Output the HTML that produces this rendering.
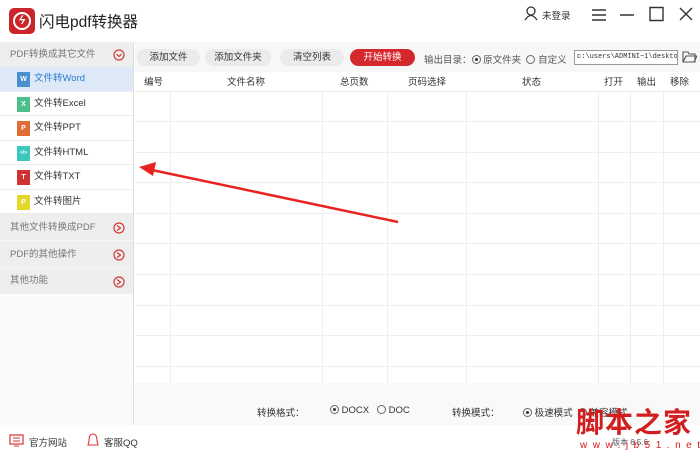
<!DOCTYPE html><html><head><meta charset="utf-8"><style>
*{margin:0;padding:0;box-sizing:border-box}
body{width:700px;height:455px;overflow:hidden;background:#fff;font-family:"Liberation Sans","Noto Sans CJK SC",sans-serif;font-size:10px;color:#333;position:relative}
.a{position:absolute}
.side{left:0;top:42px;width:134px;height:383px;background:#fafafa;border-right:1px solid #ddd}
.sh{position:absolute;left:0;width:133px;background:#eeeeee;color:#777;font-size:9.5px;padding-left:10px}
.it{position:absolute;left:0;width:133px;height:24.5px;border-bottom:1px solid #eee;background:#fff;font-size:9.5px;padding-left:34px;line-height:24px}
.ic{position:absolute;left:17px;top:5px;width:13px;height:15px;color:#fff;font-size:7px;font-weight:bold;text-align:center;line-height:15px}
.circ{position:absolute;right:8px;top:7px}
.btn{position:absolute;top:49px;height:17px;border-radius:9px;background:#ebebeb;font-size:9.5px;text-align:center;line-height:17px}
.th{position:absolute;top:77px;font-size:9.5px;line-height:12px}
.vl{position:absolute;top:91px;width:1px;height:292px;background:#eee}
.hl{position:absolute;left:135px;width:565px;height:1px;background:#eee}
.rad{display:inline-block;width:9px;height:9px;border:1px solid #666;border-radius:50%;vertical-align:-1px;position:relative}
.rad.on:after{content:"";position:absolute;left:2px;top:2px;width:3px;height:3px;border-radius:50%;background:#333}
</style></head><body>
<div class="a" style="left:9px;top:8px;width:26px;height:26px;background:#c9252b;border-radius:5px"></div>
<div class="a" style="left:13px;top:12px;width:18px;height:18px;border:2.5px solid #fff;border-radius:50%"></div>
<div class="a" style="left:19px;top:13px;color:#fff;font-size:12px;font-weight:bold;transform:skewX(-15deg)">ϟ</div>
<div class="a" style="left:39px;top:10px;font-size:15.5px;color:#222">闪电pdf转换器</div>
<svg class="a" style="left:524px;top:6px" width="14" height="15"><circle cx="7" cy="5" r="4" fill="none" stroke="#333" stroke-width="1.3"/><path d="M1 14 Q7 5 13 14" fill="none" stroke="#333" stroke-width="1.3"/></svg>
<div class="a" style="left:542px;top:8px;font-size:9.5px">未登录</div>
<svg class="a" style="left:590px;top:4px;" width="110" height="20"><path d="M2 6h14M2 11h14M2 16h14M30 11h14M60 3.5h13v13h-13zM90 4l12 12M102 4l-12 12" stroke="#333" stroke-width="1.4" fill="none"/></svg>
<div class="a side">
<div class="sh" style="top:0;height:25px;line-height:25px">PDF转换成其它文件<svg class="circ" width="12" height="12"><circle cx="6" cy="6" r="5" fill="none" stroke="#d03a3a" stroke-width="1.2"/><path d="M3.5 5l2.5 2.5 2.5-2.5" fill="none" stroke="#d03a3a" stroke-width="1.2"/></svg></div>
<div class="it" style="top:25px;background:#dde9f6;color:#2c7bd0"><div class="ic" style="background:#4a8fcf">W</div>文件转Word</div>
<div class="it" style="top:49.5px"><div class="ic" style="background:#4dbf8a">X</div>文件转Excel</div>
<div class="it" style="top:74px"><div class="ic" style="background:#e06b35">P</div>文件转PPT</div>
<div class="it" style="top:98.5px"><div class="ic" style="background:#3cc6c0;font-size:5px">&lt;/&gt;</div>文件转HTML</div>
<div class="it" style="top:123px"><div class="ic" style="background:#cf3232">T</div>文件转TXT</div>
<div class="it" style="top:147.5px"><div class="ic" style="background:#e6d82a">P</div>文件转图片</div>
<div class="sh" style="top:172px;height:27px;line-height:27px;border-bottom:1px solid #f6f6f6">其他文件转换成PDF<svg class="circ" style="top:8px" width="12" height="12"><circle cx="6" cy="6" r="5" fill="none" stroke="#d03a3a" stroke-width="1.2"/><path d="M4 3.5l3.5 2.5-3.5 2.5" fill="none" stroke="#d03a3a" stroke-width="1.2"/></svg></div>
<div class="sh" style="top:199px;height:27px;line-height:27px;border-bottom:1px solid #f6f6f6">PDF的其他操作<svg class="circ" style="top:8px" width="12" height="12"><circle cx="6" cy="6" r="5" fill="none" stroke="#d03a3a" stroke-width="1.2"/><path d="M4 3.5l3.5 2.5-3.5 2.5" fill="none" stroke="#d03a3a" stroke-width="1.2"/></svg></div>
<div class="sh" style="top:226px;height:26px;line-height:26px">其他功能<svg class="circ" style="top:8px" width="12" height="12"><circle cx="6" cy="6" r="5" fill="none" stroke="#d03a3a" stroke-width="1.2"/><path d="M4 3.5l3.5 2.5-3.5 2.5" fill="none" stroke="#d03a3a" stroke-width="1.2"/></svg></div>
</div>
<div class="a" style="left:135px;top:42px;width:565px;height:30px;background:#f7f7f7"></div>
<div class="btn" style="left:137px;width:63px">添加文件</div>
<div class="btn" style="left:205px;width:66px">添加文件夹</div>
<div class="btn" style="left:280px;width:64px">清空列表</div>
<div class="btn" style="left:350px;width:65px;background:#d5282d;color:#fff">开始转换</div>
<div class="a" style="left:424px;top:52px;font-size:9.5px;color:#555">输出目录：<span class="rad on"></span> 原文件夹 &nbsp;<span class="rad"></span> 自定义</div>
<div class="a" style="left:574px;top:50px;width:104px;height:15px;border:1px solid #999;background:#fff;font-family:'Liberation Mono',monospace;font-size:7px;line-height:13px;padding-left:2px;white-space:nowrap;overflow:hidden">c:\users\ADMINI~1\desktop</div>
<svg class="a" style="left:682px;top:51px" width="15" height="12"><path d="M1 1h5l1 2h6v8H1z M1 11l3-6h11l-3 6" fill="none" stroke="#555" stroke-width="1.1"/></svg>
<div class="th" style="left:144px">编号</div><div class="th" style="left:227px">文件名称</div><div class="th" style="left:340px">总页数</div><div class="th" style="left:408px">页码选择</div><div class="th" style="left:522px">状态</div><div class="th" style="left:604px">打开</div><div class="th" style="left:637px">输出</div><div class="th" style="left:670px">移除</div>
<div class="hl" style="top:91px"></div><div class="hl" style="top:121px"></div><div class="hl" style="top:152px"></div><div class="hl" style="top:182px"></div><div class="hl" style="top:213px"></div><div class="hl" style="top:243px"></div><div class="hl" style="top:274px"></div><div class="hl" style="top:305px"></div><div class="hl" style="top:335px"></div><div class="hl" style="top:366px"></div>
<div class="vl" style="left:170px"></div><div class="vl" style="left:322px"></div><div class="vl" style="left:387px"></div><div class="vl" style="left:466px"></div><div class="vl" style="left:598px"></div><div class="vl" style="left:630px"></div><div class="vl" style="left:663px"></div>
<div class="a" style="left:135px;top:383px;width:565px;height:42px;background:#f9f9f9"></div>
<div class="a" style="left:257px;top:405px;font-size:9.5px">转换格式：</div>
<div class="a" style="left:330px;top:405px;font-size:9.5px"><span class="rad on"></span> DOCX &nbsp;&nbsp;<span class="rad"></span> DOC</div>
<div class="a" style="left:452px;top:405px;font-size:9.5px">转换模式：</div>
<div class="a" style="left:523px;top:405px;font-size:9.5px"><span class="rad on"></span> 极速模式 &nbsp;<span class="rad"></span> 兼容模式</div>
<div class="a" style="left:612px;top:437px;font-size:8px;color:#555">版本 6.5.6</div>
<svg class="a" style="left:9px;top:434px" width="15" height="13"><rect x="1" y="1" width="13" height="9" fill="none" stroke="#d33" stroke-width="1.2"/><path d="M4 4h7M4 7h7M5 12h5" stroke="#d33"/></svg>
<div class="a" style="left:29px;top:435px;font-size:9.5px">官方网站</div>
<svg class="a" style="left:87px;top:433px" width="12" height="15"><path d="M6 1C2 1 2 6 2 8L1 12h10L10 8C10 6 10 1 6 1z" fill="none" stroke="#d33" stroke-width="1.1"/></svg>
<div class="a" style="left:104px;top:435px;font-size:9.5px">客服QQ</div>
<svg class="a" style="left:0;top:0" width="700" height="455"><path d="M398 222 L152 170" stroke="#e8231f" stroke-width="2.5"/><path d="M139 167 L156 162 L153 176 Z" fill="#e8231f"/></svg>
<div class="a" style="left:576px;top:404px;font-size:28px;line-height:34px;color:#d21e1e;font-family:'Noto Sans CJK SC',sans-serif;font-weight:bold;letter-spacing:1px">脚本之家</div>
<div class="a" style="left:580px;top:440px;font-size:10px;color:#d21e1e;letter-spacing:5.5px">www.jb51.net</div>
</body></html>
